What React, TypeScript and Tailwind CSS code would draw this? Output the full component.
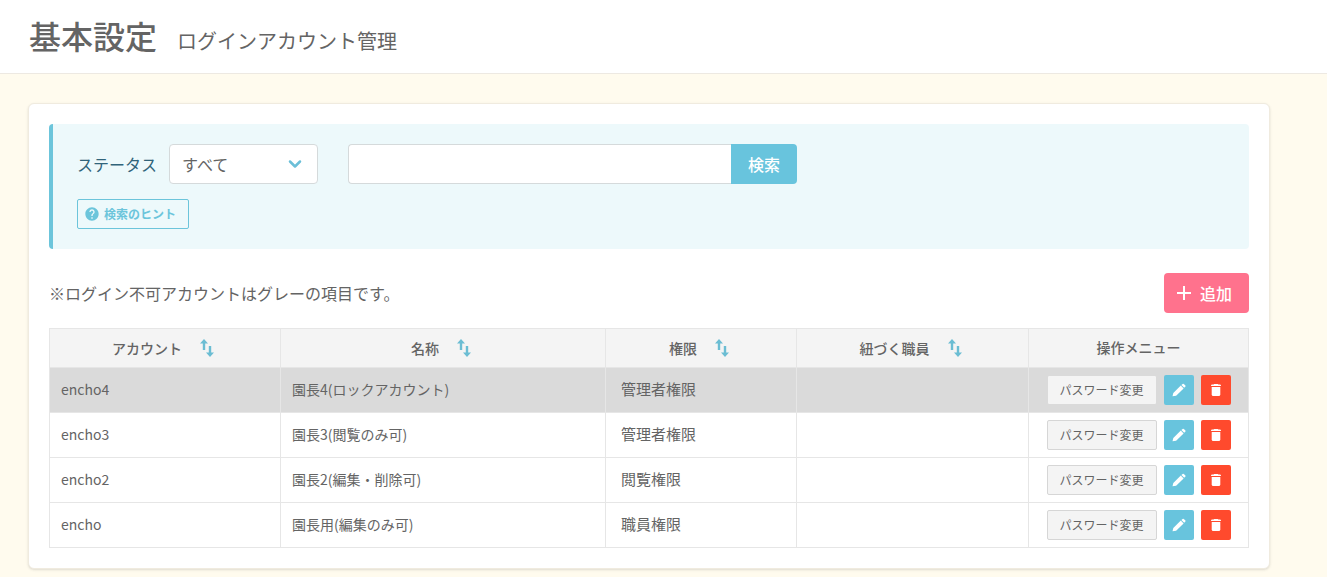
import React, { useState } from 'react';
import { MdAdd, MdHelp } from 'react-icons/md';
import { FiChevronDown } from 'react-icons/fi';

interface Account {
    id: string;
    name: string;
    role: string;
    staff: string;
    locked?: boolean;
}

const accounts: Account[] = [
    { id: 'encho4', name: '園長4(ロックアカウント)', role: '管理者権限', staff: '', locked: true },
    { id: 'encho3', name: '園長3(閲覧のみ可)', role: '管理者権限', staff: '' },
    { id: 'encho2', name: '園長2(編集・削除可)', role: '閲覧権限', staff: '' },
    { id: 'encho', name: '園長用(編集のみ可)', role: '職員権限', staff: '' },
];

const columns = [
    { label: 'アカウント', width: 'w-[231px]' },
    { label: '名称', width: '' },
    { label: '権限', width: 'w-[191px]' },
    { label: '紐づく職員', width: 'w-[232px]' },
];

const SortIcon = () => (
    <svg width="14" height="18" viewBox="0 0 14 18" fill="#6bbdd3" aria-hidden="true">
        <path d="M4 0 8 4.5H5.2V11H2.8V4.5H0z" />
        <path d="M8.8 7h2.4v6.5H14L10 18 6 13.5h2.8z" />
    </svg>
);

const PencilIcon = () => (
    <svg width="14" height="14" viewBox="0 0 14 14" fill="currentColor" aria-hidden="true">
        <path d="M.5 13.3 1.3 9.9 8.8 2.6l2.8 2.8-7.5 7.3z" />
        <path d="M9.4 2 10.6.9q.6-.5 1.2 0l1.6 1.6q.5.6 0 1.1L12.2 4.8z" />
    </svg>
);

const TrashIcon = () => (
    <svg width="12" height="14" viewBox="0 0 12 14" fill="currentColor" aria-hidden="true">
        <path d="M1 2.8Q1 1.6 2.2 1.6H3.6L4.2 1H7.8L8.4 1.6H9.8Q11 1.6 11 2.8V3.1H1z" />
        <path d="M1.7 4H10.3V11.4Q10.3 13 8.7 13H3.3Q1.7 13 1.7 11.4z" />
    </svg>
);

const SearchPanel = () => {
    const [status, setStatus] = useState('all');
    const [keyword, setKeyword] = useState('');

    return (
        <form
            className="rounded border-l-4 border-[#6cc5db] bg-[#edf9fb] py-5 pl-6 pr-5"
            onSubmit={(e) => e.preventDefault()}
        >
            <div className="flex items-center">
                <label htmlFor="status" className="mr-3 text-[#31647a]">
                    ステータス
                </label>
                <div className="relative mr-[30px]">
                    <select
                        id="status"
                        className="h-10 w-[149px] appearance-none rounded border border-[#d5dadb] bg-white pl-3 pr-9 outline-none"
                        value={status}
                        onChange={(e) => setStatus(e.target.value)}
                    >
                        <option value="all">すべて</option>
                        <option value="active">ログイン可</option>
                        <option value="locked">ログイン不可</option>
                    </select>
                    <FiChevronDown
                        className="pointer-events-none absolute right-[13px] top-2.5 text-xl text-[#6bbfd8]"
                        strokeWidth={3}
                    />
                </div>
                <input
                    type="text"
                    aria-label="キーワード"
                    className="h-10 w-[383px] rounded-l border border-r-0 border-[#d5dadb] bg-white px-3 outline-none"
                    value={keyword}
                    onChange={(e) => setKeyword(e.target.value)}
                />
                <button type="submit" className="h-10 w-[66px] rounded-r bg-[#68c4dd] font-medium text-white">
                    検索
                </button>
            </div>
            <button
                type="button"
                className="mt-[15px] flex h-[30px] w-28 items-center gap-1 rounded-xs border border-[#6cc5db] pl-1.5 text-xs font-bold text-[#6cc5db]"
            >
                <MdHelp className="text-base" />
                検索のヒント
            </button>
        </form>
    );
};

const AccountRow = ({ account }: { account: Account }) => (
    <tr className={`h-[45px] ${account.locked ? 'bg-[#dadada]' : 'bg-white'}`}>
        <td className="border border-[#e6e6e6] px-[11px] pb-0.5">{account.id}</td>
        <td className="border border-[#e6e6e6] px-[11px] pb-0.5">{account.name}</td>
        <td className="border border-[#e6e6e6] px-[15px] pb-0.5 text-[15px]">{account.role}</td>
        <td className="border border-[#e6e6e6] px-[11px] pb-0.5">{account.staff}</td>
        <td className="border border-[#e6e6e6]">
            <div className="flex items-center justify-center gap-[7px]">
                <button
                    type="button"
                    className={`h-[30px] w-[110px] rounded-xs border bg-[#f4f4f4] text-xs ${account.locked ? 'border-[#dadada]' : 'border-[#d6d6d6]'}`}
                >
                    パスワード変更
                </button>
                <button
                    type="button"
                    aria-label="編集"
                    className="flex size-[30px] items-center justify-center rounded-xs bg-[#68c4dd] text-white"
                >
                    <PencilIcon />
                </button>
                <button
                    type="button"
                    aria-label="削除"
                    className="flex size-[30px] items-center justify-center rounded-xs bg-[#ff4a2d] text-white"
                >
                    <TrashIcon />
                </button>
            </div>
        </td>
    </tr>
);

const App = () => {
    return (
        <div className="min-h-screen bg-[#fffbee] font-['Noto_Sans_CJK_JP',sans-serif] text-base text-[#646464]">
            <header className="flex items-baseline gap-5 border-b border-[#ede9e2] bg-white px-[29px] pb-[14px] pt-[11px]">
                <h1 className="text-[32px] font-medium leading-[48px]">基本設定</h1>
                <p className="text-xl">ログインアカウント管理</p>
            </header>

            <main className="pb-2 pl-7 pr-[57px] pt-[29px]">
                <section className="rounded-md border border-[#f0ebdf] bg-white p-5 shadow-sm">
                    <SearchPanel />

                    <div className="mt-6 flex items-center justify-between">
                        <p>※ログイン不可アカウントはグレーの項目です。</p>
                        <button
                            type="button"
                            className="flex h-10 w-[85px] items-center gap-1 rounded bg-[#ff728d] pl-2 font-medium text-white"
                        >
                            <MdAdd className="text-2xl" />
                            追加
                        </button>
                    </div>

                    <table className="mt-[15px] w-full table-fixed border-collapse text-sm">
                        <thead>
                            <tr className="h-[39px] bg-[#f4f4f4]">
                                {columns.map((column) => (
                                    <th key={column.label} className={`border border-[#e6e6e6] font-medium ${column.width}`}>
                                        <button type="button" className="inline-flex items-center gap-[18px] pr-1">
                                            {column.label}
                                            <SortIcon />
                                        </button>
                                    </th>
                                ))}
                                <th className="w-[220px] border border-[#e6e6e6] pb-0.5 font-medium">操作メニュー</th>
                            </tr>
                        </thead>
                        <tbody>
                            {accounts.map((account) => (
                                <AccountRow key={account.id} account={account} />
                            ))}
                        </tbody>
                    </table>
                </section>
            </main>
        </div>
    );
};

export default App;
